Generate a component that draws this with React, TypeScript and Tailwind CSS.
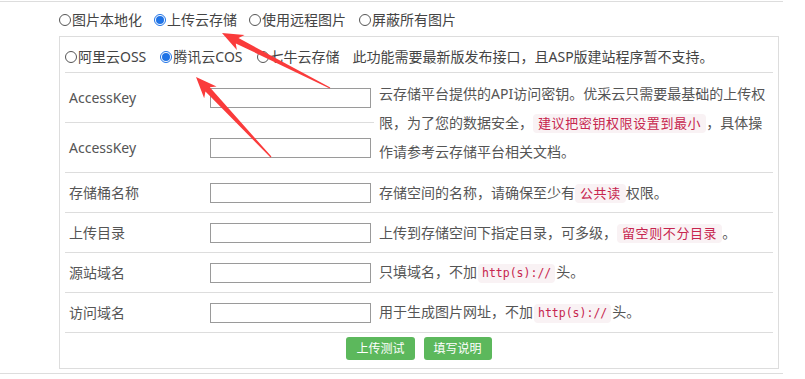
import React from "react";

const FONT = { fontFamily: '"Noto Sans", "Noto Sans CJK SC", sans-serif' };

function Radio({ checked, label, className = "" }: { checked?: boolean; label: string; className?: string }) {
  return (
    <span className={"flex items-center " + className}>
      {checked ? (
        <span className="w-[12px] h-[12px] rounded-full border border-[#1f73e6] p-[1px] bg-white flex">
          <span className="w-full h-full rounded-full bg-[#1f73e6]" />
        </span>
      ) : (
        <span className="w-[12px] h-[12px] rounded-full border border-[#555] bg-white" />
      )}
      <span className="ml-[1px] leading-[20px]">{label}</span>
    </span>
  );
}

function Chip({ children }: { children: React.ReactNode }) {
  return (
    <span className="inline-block px-[5px] py-[2px] leading-[15px] rounded-[4px] bg-[#f9f2f4] text-[#c7254e] text-[13px] tracking-[0.6px] align-baseline">
      {children}
    </span>
  );
}

function CodeChip() {
  return (
    <span
      className="inline-block px-[4px] py-[2px] mx-[1px] leading-[15px] rounded-[4px] bg-[#f9f2f4] text-[#c7254e] text-[11.5px]"
      style={{ fontFamily: '"DejaVu Sans Mono", monospace' }}
    >
      http(s)://
    </span>
  );
}

function Input() {
  return <div className="w-[161px] h-[20px] border border-[#9a9a9a] bg-white" />;
}

function Row({ label, children }: { label: string; children: React.ReactNode }) {
  return (
    <div className="flex h-[40px] border-b border-[#ddd] items-center">
      <div className="w-[145px] pl-[4px] leading-[20px]">{label}</div>
      <div className="w-[164px] flex items-center">
        <Input />
      </div>
      <div className="flex-1 pl-[5px] leading-[20px] whitespace-nowrap">{children}</div>
    </div>
  );
}

function Arrow({ tx, ty, hx, hy }: { tx: number; ty: number; hx: number; hy: number }) {
  const dx = hx - tx;
  const dy = hy - ty;
  const L = Math.sqrt(dx * dx + dy * dy);
  const a = (Math.atan2(dy, dx) * 180) / Math.PI;
  const pts = [
    [0, -0.6],
    [L - 17, -3],
    [L - 21, -8.5],
    [L, 0],
    [L - 21, 8.5],
    [L - 17, 3],
    [0, 0.6],
  ]
    .map((p) => p.join(","))
    .join(" ");
  return <polygon points={pts} fill="#fa3b3b" transform={`translate(${tx} ${ty}) rotate(${a})`} />;
}

export default function App() {
  return (
    <div className="relative w-[805px] h-[379px] bg-white overflow-hidden text-[14px] text-[#555]" style={FONT}>
      <div className="mt-[1px] w-[783px] border-y border-[#ddd]">
        <div className="pl-[59px] pr-[4px] pb-[4px]">
          <div className="h-[34px] pt-[2px] flex items-center text-[#444]">
            <Radio label="图片本地化" />
            <Radio label="上传云存储" checked className="ml-[12px]" />
            <Radio label="使用远程图片" className="ml-[12px]" />
            <Radio label="屏蔽所有图片" className="ml-[13px]" />
          </div>
          <div className="border border-[#ddd] p-[5px]">
            <div className="h-[31px] border-b border-[#ddd] flex items-center text-[#444]">
              <Radio label="阿里云OSS" />
              <Radio label="腾讯云COS" checked className="ml-[14px]" />
              <Radio label="七牛云存储" className="ml-[14px]" />
              <span className="ml-[13px] leading-[20px]">此功能需要最新版发布接口，且ASP版建站程序暂不支持。</span>
            </div>
            <div className="grid grid-cols-[145px_164px_1fr]">
              <div className="h-[50px] border-b border-[#ddd] pl-[4px] flex items-center leading-[20px]">AccessKey</div>
              <div className="h-[50px] border-b border-[#ddd] flex items-center">
                <Input />
              </div>
              <div className="row-span-2 h-[100px] border-b border-[#ddd] pl-[5px] flex items-center leading-[29px] whitespace-nowrap">
                <div>
                  云存储平台提供的API访问密钥。优采云只需要最基础的上传权
                  <br />
                  限，为了您的数据安全，<Chip>建议把密钥权限设置到最小</Chip>，具体操
                  <br />
                  作请参考云存储平台相关文档。
                </div>
              </div>
              <div className="h-[50px] border-b border-[#ddd] pl-[4px] flex items-center leading-[20px]">AccessKey</div>
              <div className="h-[50px] border-b border-[#ddd] flex items-center">
                <Input />
              </div>
            </div>
            <Row label="存储桶名称">
              存储空间的名称，请确保至少有<Chip>公共读</Chip>权限。
            </Row>
            <Row label="上传目录">
              上传到存储空间下指定目录，可多级，<Chip>留空则不分目录</Chip>。
            </Row>
            <Row label="源站域名">
              只填域名，不加<CodeChip />头。
            </Row>
            <Row label="访问域名">
              用于生成图片网址，不加<CodeChip />头。
            </Row>
            <div className="h-[30px] pt-[4px] flex justify-center items-start gap-[9px]">
              <button className="h-[23px] px-[10px] rounded-[3px] bg-[#5cb85c] text-white text-[12px] leading-[23px]">
                上传测试
              </button>
              <button className="h-[23px] px-[10px] rounded-[3px] bg-[#5cb85c] text-white text-[12px] leading-[23px]">
                填写说明
              </button>
            </div>
          </div>
        </div>
      </div>
      <svg className="absolute left-0 top-0 pointer-events-none" width={805} height={379}>
        <Arrow tx={330} ty={88} hx={222} hy={33} />
        <Arrow tx={271} ty={157} hx={196} hy={77} />
      </svg>
    </div>
  );
}
